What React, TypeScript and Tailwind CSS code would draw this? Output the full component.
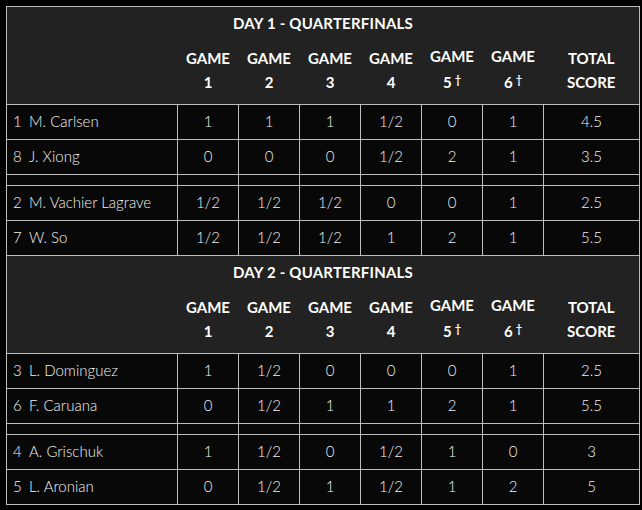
import { Fragment } from 'react';

type Player = {
  seed: number;
  name: string;
  games: string[];
  total: string;
};

type Day = {
  title: string;
  matches: Player[][];
};

const days: Day[] = [
  {
    title: 'DAY 1 - QUARTERFINALS',
    matches: [
      [
        { seed: 1, name: 'M. Carlsen', games: ['1', '1', '1', '1/2', '0', '1'], total: '4.5' },
        { seed: 8, name: 'J. Xiong', games: ['0', '0', '0', '1/2', '2', '1'], total: '3.5' },
      ],
      [
        { seed: 2, name: 'M. Vachier Lagrave', games: ['1/2', '1/2', '1/2', '0', '0', '1'], total: '2.5' },
        { seed: 7, name: 'W. So', games: ['1/2', '1/2', '1/2', '1', '2', '1'], total: '5.5' },
      ],
    ],
  },
  {
    title: 'DAY 2 - QUARTERFINALS',
    matches: [
      [
        { seed: 3, name: 'L. Dominguez', games: ['1', '1/2', '0', '0', '0', '1'], total: '2.5' },
        { seed: 6, name: 'F. Caruana', games: ['0', '1/2', '1', '1', '2', '1'], total: '5.5' },
      ],
      [
        { seed: 4, name: 'A. Grischuk', games: ['1', '1/2', '0', '1/2', '1', '0'], total: '3' },
        { seed: 5, name: 'L. Aronian', games: ['0', '1/2', '1', '1/2', '1', '2'], total: '5' },
      ],
    ],
  },
];

const cell = 'border border-[#bdbdbd] text-center align-middle pb-[2px]';

function DayHeader({ title }: { title: string }) {
  return (
    <>
      <tr className="bg-[#222222] h-[34px]">
        <th colSpan={8} className="text-center align-middle pb-[2px] text-[15px] font-bold text-white tracking-[0.2px]">
          {title}
        </th>
      </tr>
      <tr className="bg-[#222222] h-[64px] text-[15px] font-bold text-white leading-[24px]">
        <th />
        {[1, 2, 3, 4, 5, 6].map((n) => (
          <th key={n} className="text-center align-top pt-[5px]">
            {n > 4 ? <span className="relative -top-[2px]">GAME</span> : 'GAME'}
            <br />
            {n}
            {n > 4 && <sup className="text-[11px] ml-[3px] relative -top-[4px]">†</sup>}
          </th>
        ))}
        <th className="text-center align-top pt-[5px]">
          TOTAL
          <br />
          SCORE
        </th>
      </tr>
    </>
  );
}

function PlayerRow({ player }: { player: Player }) {
  return (
    <tr className="h-[35px] bg-[#080808]">
      <td className="border border-[#bdbdbd] pl-[6px] pb-[2px] text-left align-middle whitespace-nowrap">
        <span className="inline-block w-[16px] tabular-nums">{player.seed}</span>
        {player.name}
      </td>
      {player.games.map((g, i) => (
        <td key={i} className={cell}>
          {g}
        </td>
      ))}
      <td className={cell}>{player.total}</td>
    </tr>
  );
}

function SpacerRow() {
  return (
    <tr className="h-[11px] bg-[#080808]">
      {Array.from({ length: 8 }).map((_, i) => (
        <td key={i} className="border border-[#bdbdbd] p-0" />
      ))}
    </tr>
  );
}

export default function App() {
  return (
    <div className="w-[642px] h-[510px] bg-black p-[6px] font-['Lato','Liberation_Sans',sans-serif]">
      <table className="w-[633px] table-fixed border-collapse border border-[#bdbdbd] text-[15px] font-light text-[#f2f2f2]">
        <colgroup>
          <col className="w-[171px]" />
          <col className="w-[61px]" />
          <col className="w-[61px]" />
          <col className="w-[61px]" />
          <col className="w-[61px]" />
          <col className="w-[61px]" />
          <col className="w-[61px]" />
          <col className="w-[96px]" />
        </colgroup>
        <tbody>
          {days.map((day) => (
            <Fragment key={day.title}>
              <DayHeader title={day.title} />
              {day.matches.map((match, mi) => (
                <Fragment key={mi}>
                  {mi > 0 && <SpacerRow />}
                  {match.map((p) => (
                    <PlayerRow key={p.seed} player={p} />
                  ))}
                </Fragment>
              ))}
            </Fragment>
          ))}
        </tbody>
      </table>
    </div>
  );
}
